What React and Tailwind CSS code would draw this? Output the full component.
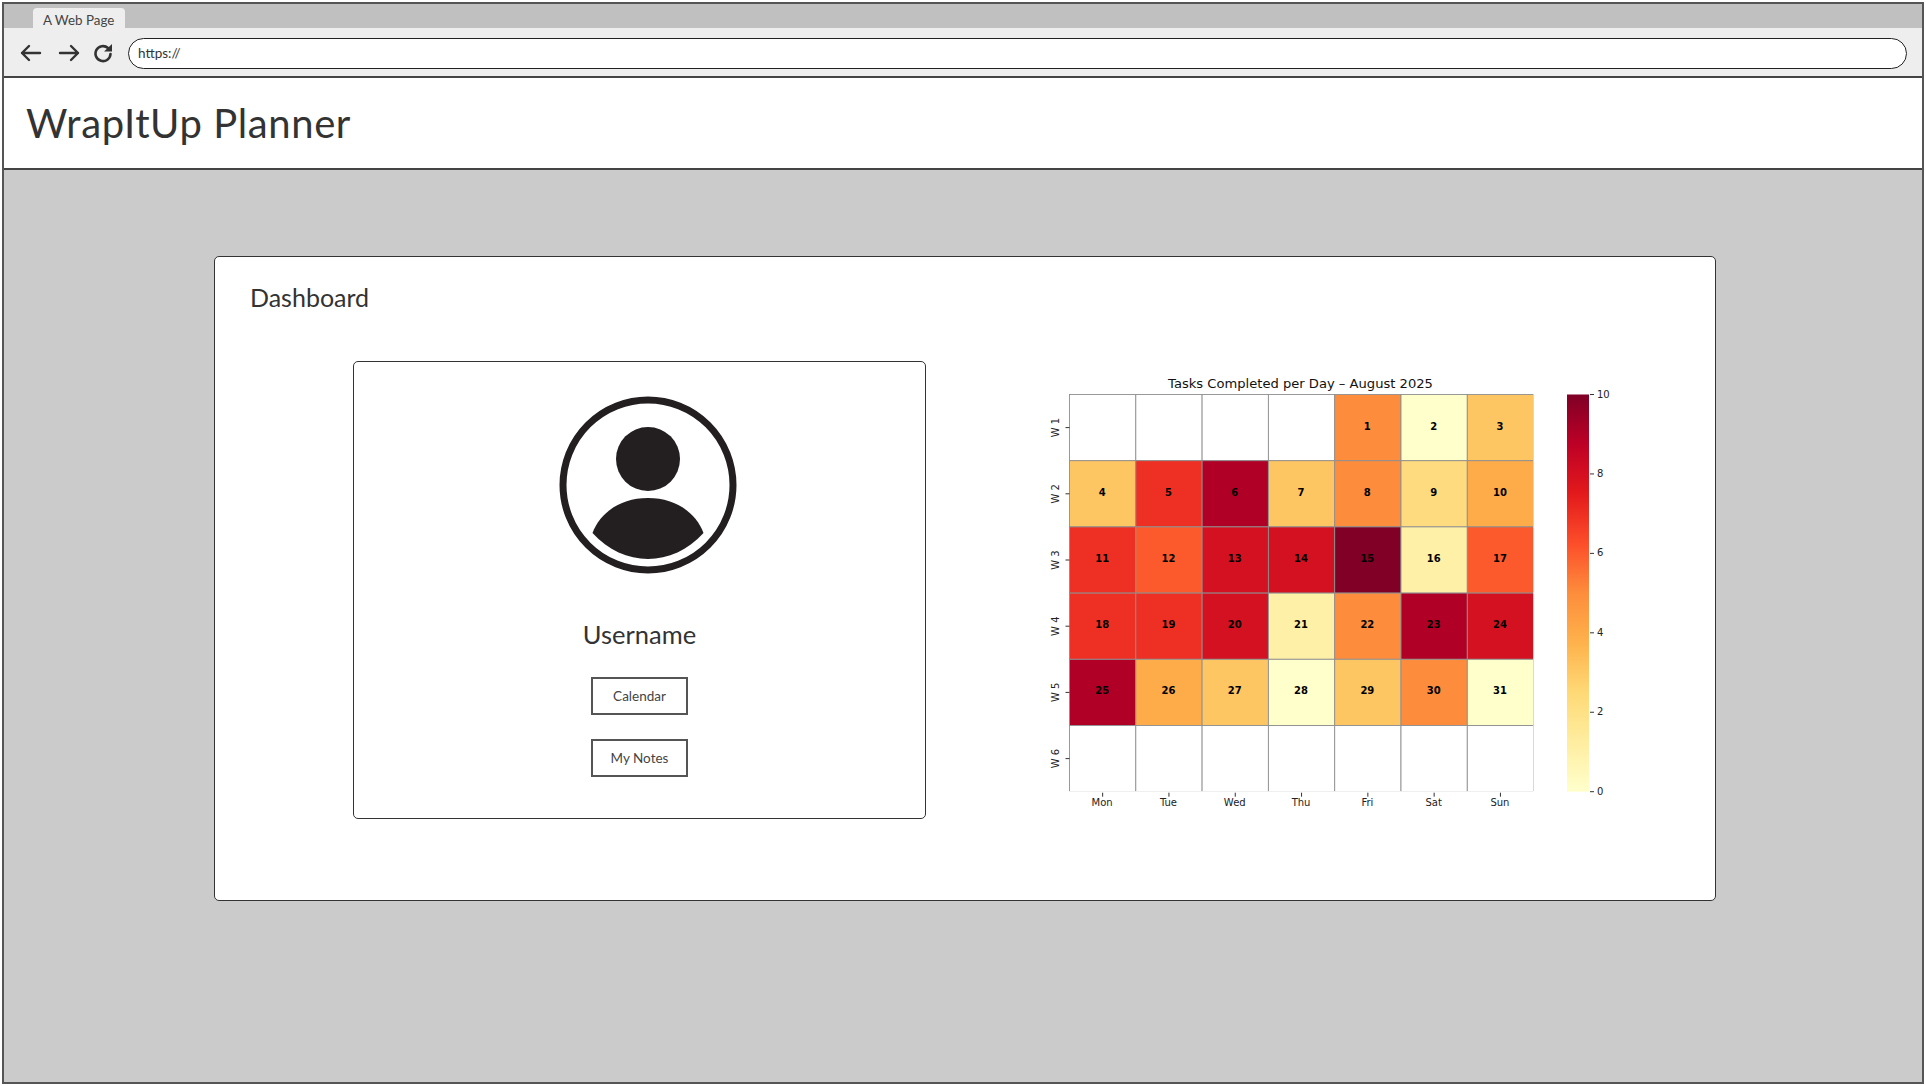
const days = ['Mon', 'Tue', 'Wed', 'Thu', 'Fri', 'Sat', 'Sun']
const weeks = ['W 1', 'W 2', 'W 3', 'W 4', 'W 5', 'W 6']

const shades = {
  0: '#ffffcc',
  1: '#fff0a8',
  2: '#fedb7e',
  3: '#fec662',
  4: '#feab49',
  5: '#fd8d3c',
  6: '#fc5a2d',
  7: '#ee3024',
  8: '#d31121',
  9: '#b10026',
  10: '#800026',
}

// [day of month, tasks] per cell, null where the month has no such day
const grid = [
  [null, null, null, null, [1, 5], [2, 0], [3, 3]],
  [[4, 3], [5, 7], [6, 9], [7, 3], [8, 5], [9, 2], [10, 4]],
  [[11, 7], [12, 6], [13, 8], [14, 8], [15, 10], [16, 1], [17, 6]],
  [[18, 7], [19, 7], [20, 8], [21, 1], [22, 5], [23, 9], [24, 8]],
  [[25, 9], [26, 4], [27, 3], [28, 0], [29, 3], [30, 5], [31, 0]],
  [null, null, null, null, null, null, null],
]

const CELL_W = 66.3
const CELL_H = 66.2
const LEFT = 28.5
const TOP = 24.5

function Heatmap() {
  return (
    <svg width="600" height="445" viewBox="0 0 600 445" className="ml-[115px] mt-[9px] shrink-0" style={{ fontFamily: '"DejaVu Sans", sans-serif' }}>
      <defs>
        <linearGradient id="ylorrd" x1="0" y1="1" x2="0" y2="0">
          <stop offset="0" stopColor="#ffffcc" />
          <stop offset="0.125" stopColor="#ffeda0" />
          <stop offset="0.25" stopColor="#fed976" />
          <stop offset="0.375" stopColor="#feb24c" />
          <stop offset="0.5" stopColor="#fd8d3c" />
          <stop offset="0.625" stopColor="#fc4e2a" />
          <stop offset="0.75" stopColor="#e31a1c" />
          <stop offset="0.875" stopColor="#bd0026" />
          <stop offset="1" stopColor="#800026" />
        </linearGradient>
      </defs>

      <text x="259.5" y="17.5" textAnchor="middle" fontSize="13.1" fill="#111">Tasks Completed per Day – August 2025</text>

      {grid.map((row, r) =>
        row.map((cell, c) => (
          <g key={`${r}-${c}`}>
            <rect
              x={LEFT + c * CELL_W}
              y={TOP + r * CELL_H}
              width={CELL_W}
              height={CELL_H}
              fill={cell ? shades[cell[1]] : '#ffffff'}
              stroke="#8f8f8f"
              strokeWidth="0.9"
            />
            {cell && (
              <text
                x={LEFT + (c + 0.5) * CELL_W - 0.5}
                y={TOP + (r + 0.5) * CELL_H + 2}
                textAnchor="middle"
                fontSize="10"
                fontWeight="700"
                fill="#000"
              >
                {cell[0]}
              </text>
            )}
          </g>
        ))
      )}
      {/* the plot has no outer line on the right or under the empty week */}
      <rect x={LEFT + 7 * CELL_W - 0.2} y={TOP - 1} width="2" height={6 * CELL_H + 2} fill="#fff" />
      <rect x={LEFT - 1} y={TOP + 6 * CELL_H - 0.5} width={7 * CELL_W + 3} height="2" fill="#fff" />

      {weeks.map((w, i) => (
        <g key={w}>
          <line x1={LEFT - 4} x2={LEFT} y1={TOP + (i + 0.5) * CELL_H} y2={TOP + (i + 0.5) * CELL_H} stroke="#333" />
          <text
            transform={`translate(18 ${TOP + (i + 0.5) * CELL_H}) rotate(-90)`}
            textAnchor="middle"
            fontSize="10"
            fill="#222"
          >
            {w}
          </text>
        </g>
      ))}
      {days.map((d, i) => (
        <g key={d}>
          <line x1={LEFT + (i + 0.5) * CELL_W} x2={LEFT + (i + 0.5) * CELL_W} y1={TOP + 6 * CELL_H + 1} y2={TOP + 6 * CELL_H + 5} stroke="#333" />
          <text x={LEFT + (i + 0.5) * CELL_W - 0.5} y="436" textAnchor="middle" fontSize="10" fill="#222">{d}</text>
        </g>
      ))}

      <rect x="526" y={TOP} width="22" height={6 * CELL_H} fill="url(#ylorrd)" />
      {[0, 2, 4, 6, 8, 10].map((t) => {
        const y = TOP + 6 * CELL_H * (1 - t / 10)
        return (
          <g key={t}>
            <line x1="549" x2="553" y1={y} y2={y} stroke="#333" />
            <text x="556" y={y + 3} fontSize="10" fill="#222">{t}</text>
          </g>
        )
      })}
    </svg>
  )
}

function Avatar() {
  return (
    <svg width="180" height="180" viewBox="0 0 180 180" className="ml-[17px] shrink-0">
      <circle cx="90" cy="90" r="85" fill="none" stroke="#231f20" strokeWidth="7" />
      <circle cx="90" cy="64" r="32" fill="#231f20" />
      <path d="M34.5 138 C42 118 62 103 90 103 C118 103 138 118 145.5 138 C130 155 110 164 90 164 C70 164 50 155 34.5 138 Z" fill="#231f20" />
    </svg>
  )
}

function SketchButton({ label, className }) {
  return (
    <button className={`w-[97px] h-[38px] border-2 border-[#555] bg-white text-[13.5px] text-[#444] ${className}`}>
      {label}
    </button>
  )
}

export default function App() {
  return (
    <div className="m-[2px] h-[1082px] flex flex-col border-2 border-[#555] bg-[#cbcbcb] text-[#333] overflow-hidden" style={{ fontFamily: 'Lato, sans-serif' }}>
      {/* Browser chrome */}
      <div className="h-[24px] bg-[#c0c0c0] pl-[29px] pt-[4px] shrink-0">
        <div className="w-[92px] h-[20px] rounded-t-[4px] bg-[#eeeeee] pl-[10px] text-[13.4px] leading-[25px] text-[#444]">A Web Page</div>
      </div>
      <div className="h-[50px] bg-[#eeeeee] border-b-2 border-[#444] flex items-center pt-[2px] pl-[16px] pr-[15px] shrink-0">
        <svg width="22" height="18" viewBox="0 0 22 18" fill="none" stroke="#333" strokeWidth="2.4" strokeLinecap="round" strokeLinejoin="round" className="shrink-0">
          <path d="M20 9 H2 M9 2 L2 9 L9 16" />
        </svg>
        <svg width="22" height="18" viewBox="0 0 22 18" fill="none" stroke="#333" strokeWidth="2.4" strokeLinecap="round" strokeLinejoin="round" className="ml-[16px] shrink-0">
          <path d="M2 9 H20 M13 2 L20 9 L13 16" />
        </svg>
        <svg width="20" height="20" viewBox="0 0 20 20" fill="none" className="ml-[13px] shrink-0">
          <path d="M15 5 A7.5 7.5 0 1 0 17.5 11" stroke="#333" strokeWidth="2.6" strokeLinecap="round" />
          <path d="M11 8.5 H19 V1 Z" fill="#333" />
        </svg>
        <div className="ml-[15px] flex-1 h-[31px] rounded-full border border-[#222] bg-white pl-[9px] text-[13.5px] leading-[29px] text-[#333]">https://</div>
      </div>

      {/* Page header */}
      <header className="h-[92px] bg-white border-b-2 border-[#444] pl-[22px] flex items-center shrink-0">
        <h1 className="text-[40px] leading-[48px] tracking-[0.6px] text-[#333]">WrapItUp Planner</h1>
      </header>

      {/* Main */}
      <main className="flex-1 pl-[210px] pt-[86px]">
        <section className="w-[1502px] h-[645px] rounded-[5px] border border-[#333] bg-white pl-[35px] pt-[26px]">
          <h2 className="text-[25px] leading-[28px] text-[#333]">Dashboard</h2>
          <div className="flex items-start ml-[103px] mt-[50px]">
            <div className="w-[573px] h-[458px] shrink-0 rounded-[5px] border border-[#333] flex flex-col items-center pt-[33px]">
              <Avatar />
              <div className="mt-[44px] text-[25.5px] leading-[30px] text-[#333]">Username</div>
              <SketchButton label="Calendar" className="mt-[28px]" />
              <SketchButton label="My Notes" className="mt-[24px]" />
            </div>
            <Heatmap />
          </div>
        </section>
      </main>
    </div>
  )
}
